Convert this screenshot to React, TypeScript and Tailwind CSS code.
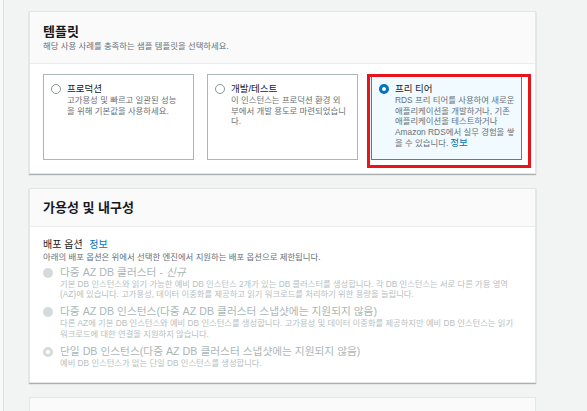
import React from 'react'

const font = { fontFamily: '"Liberation Sans", "Noto Sans CJK KR", sans-serif' }

function Radio({ kind }: { kind: 'off' | 'on' | 'disabled' | 'disabledOn' }) {
  if (kind === 'on') return <span className="mt-[2px] block h-[10px] w-[10px] shrink-0 rounded-full border-[3px] border-[#0073bb] bg-white" />
  if (kind === 'disabled') return <span className="mt-[2px] block h-[10px] w-[10px] shrink-0 rounded-full bg-[#d5dbdb]" />
  if (kind === 'disabledOn') return <span className="mt-[2px] block h-[10px] w-[10px] shrink-0 rounded-full border-[3px] border-[#d5dbdb] bg-white" />
  return <span className="mt-[2px] block h-[10px] w-[10px] shrink-0 rounded-full border border-[#879596] bg-white" />
}

function Tile({ label, lines, selected, info }: { label: string; lines: string[]; selected?: boolean; info?: boolean }) {
  return (
    <div className={`flex h-[86px] w-[151px] gap-[6px] border px-[7px] pt-[7px] ${selected ? 'border-[#00a1c9] bg-[#f1faff]' : 'border-[#aab7b8] bg-white'}`}>
      <Radio kind={selected ? 'on' : 'off'} />
      <div className="min-w-0">
        <p className="whitespace-nowrap text-[9.5px] leading-[13px] text-[#16191f]">{label}</p>
        {lines.map((l, i) => (
          <p key={i} className="whitespace-nowrap text-[8.4px] leading-[10.7px] text-[#687078]">
            {l}
            {info && i === lines.length - 1 && <span className="ml-[2px] text-[9.5px] text-[#0073bb]">정보</span>}
          </p>
        ))}
      </div>
    </div>
  )
}

function Option({ kind, label, lines }: { kind: 'disabled' | 'disabledOn'; label: React.ReactNode; lines: string[] }) {
  return (
    <div className="flex gap-[7px]">
      <Radio kind={kind} />
      <div>
        <p className="whitespace-nowrap text-[10.7px] leading-[13px] text-[#aab7b8]">{label}</p>
        {lines.map((l, i) => (
          <p key={i} className="whitespace-nowrap text-[8.3px] leading-[10.7px] text-[#b6c0c1]">{l}</p>
        ))}
      </div>
    </div>
  )
}

export default function App() {
  return (
    <div className="flex h-[411px] w-[587px] overflow-hidden bg-[#f2f3f3]" style={font}>
      {/* left edge strip */}
      <div className="w-[4px] shrink-0 border-r border-[#dcdfdf] bg-[#f8f8f8]" />

      <div className="ml-[25px] flex w-[507px] flex-col gap-[14px] pt-[11px]">
        {/* TEMPLATES */}
        <section className="border border-[#e3e6e6] bg-white shadow-[0_1px_1px_0_rgba(0,28,36,0.3)]">
          <header className="border-b border-[#eaeded] bg-[#fafafa] px-[13px] pt-[12px] pb-[11px]">
            <h2 className="text-[13px] font-bold leading-[15px] text-[#16191f]">템플릿</h2>
            <p className="mt-[2px] text-[8.4px] leading-[11px] text-[#687078]">해당 사용 사례를 충족하는 샘플 템플릿을 선택하세요.</p>
          </header>
          <div className="relative flex gap-[13px] px-[13px] pt-[10px] pb-[13px]">
            <Tile label="프로덕션" lines={['고가용성 및 빠르고 일관된 성능', '을 위해 기본값을 사용하세요.']} />
            <Tile label="개발/테스트" lines={['이 인스턴스는 프로덕션 환경 외', '부에서 개발 용도로 마련되었습니', '다.']} />
            <Tile
              selected
              info
              label="프리 티어"
              lines={['RDS 프리 티어를 사용하여 새로운', '애플리케이션을 개발하거나, 기존', '애플리케이션을 테스트하거나', 'Amazon RDS에서 실무 경험을 쌓', '을 수 있습니다.']}
            />
            {/* annotation box */}
            <div className="pointer-events-none absolute top-[10px] left-[337px] h-[94px] w-[164px] border-[3px] border-[#e8141c]" />
          </div>
        </section>

        {/* AVAILABILITY */}
        <section className="border border-[#e3e6e6] bg-white shadow-[0_1px_1px_0_rgba(0,28,36,0.3)]">
          <header className="border-b border-[#eaeded] bg-[#fafafa] px-[13px] py-[11px]">
            <h2 className="text-[13px] font-bold leading-[15px] text-[#16191f]">가용성 및 내구성</h2>
          </header>
          <div className="px-[13px] pt-[11px] pb-[14px]">
            <p className="text-[10px] leading-[13px] text-[#16191f]">
              배포 옵션 <span className="ml-[4px] text-[#0073bb]">정보</span>
            </p>
            <p className="mt-[1px] text-[8.4px] leading-[10.7px] text-[#687078]">아래의 배포 옵션은 위에서 선택한 엔진에서 지원하는 배포 옵션으로 제한됩니다.</p>
            <div className="mt-[3px] flex flex-col gap-[5px]">
              <Option
                kind="disabled"
                label={<>다중 AZ DB 클러스터 - <i>신규</i></>}
                lines={[
                  '기본 DB 인스턴스와 읽기 가능한 예비 DB 인스턴스 2개가 있는 DB 클러스터를 생성합니다. 각 DB 인스턴스는 서로 다른 가용 영역',
                  '(AZ)에 있습니다. 고가용성, 데이터 이중화를 제공하고 읽기 워크로드를 처리하기 위한 용량을 늘립니다.',
                ]}
              />
              <Option
                kind="disabled"
                label="다중 AZ DB 인스턴스(다중 AZ DB 클러스터 스냅샷에는 지원되지 않음)"
                lines={[
                  '다른 AZ에 기본 DB 인스턴스와 예비 DB 인스턴스를 생성합니다. 고가용성 및 데이터 이중화를 제공하지만 예비 DB 인스턴스는 읽기',
                  '워크로드에 대한 연결을 지원하지 않습니다.',
                ]}
              />
              <Option
                kind="disabledOn"
                label="단일 DB 인스턴스(다중 AZ DB 클러스터 스냅샷에는 지원되지 않음)"
                lines={['예비 DB 인스턴스가 없는 단일 DB 인스턴스를 생성합니다.']}
              />
            </div>
          </div>
        </section>

        {/* next card, cut off */}
        <section className="h-[40px] shrink-0 border border-[#e3e6e6] bg-[#fafafa]" />
      </div>
    </div>
  )
}
